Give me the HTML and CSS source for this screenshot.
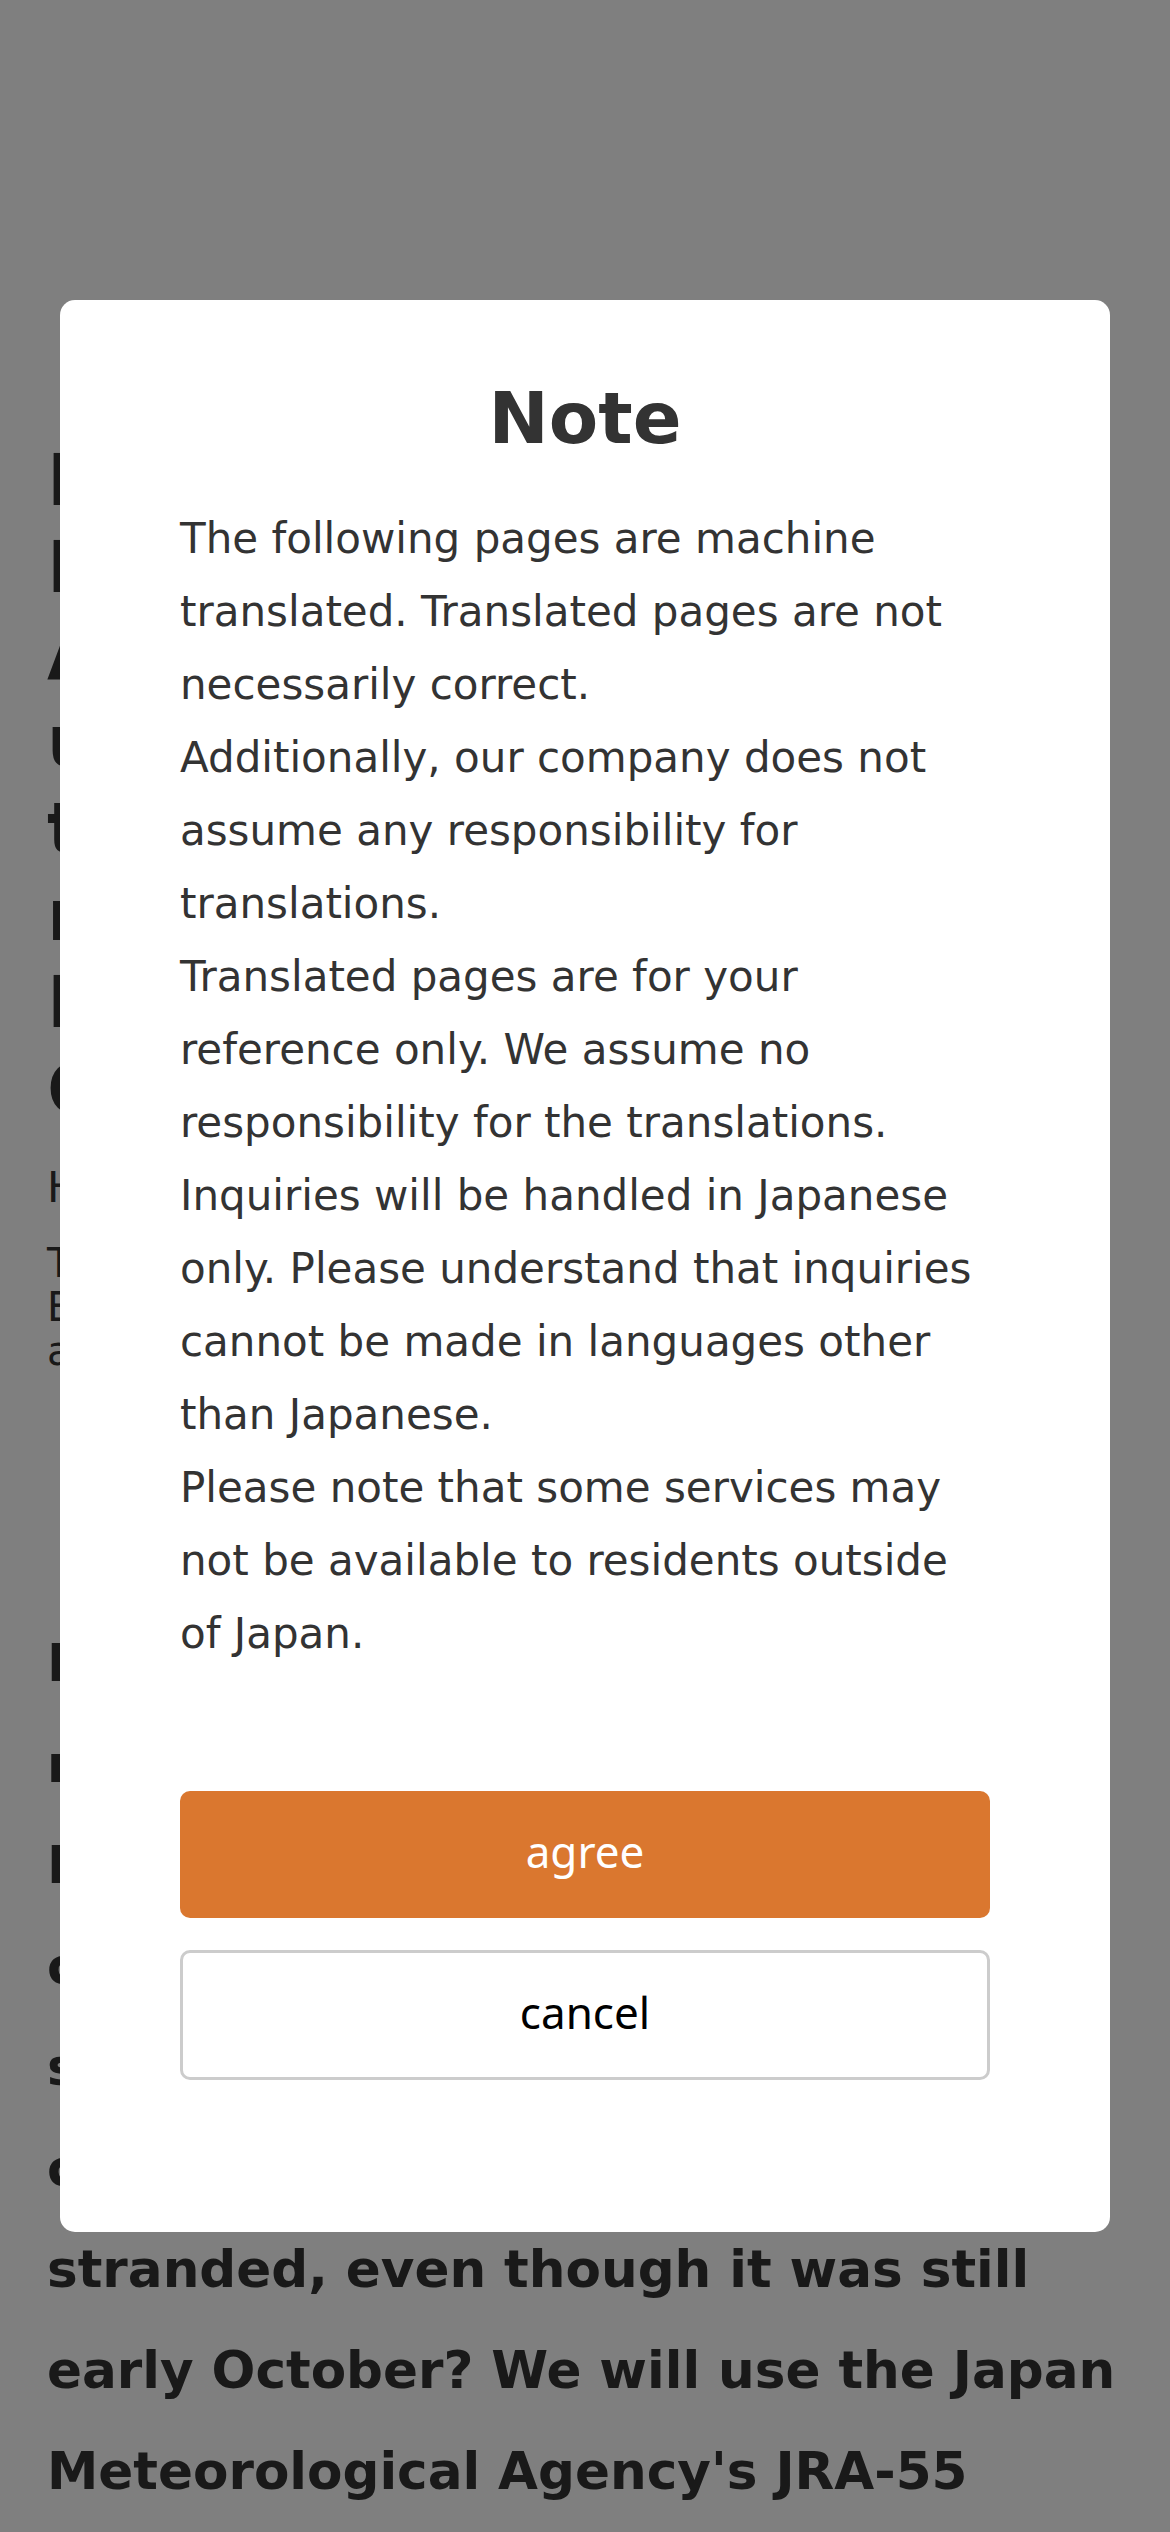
FILE: index.html
```html
<!DOCTYPE html>
<html lang="en">
<head>
<meta charset="utf-8">
<title>Note</title>
<link rel="stylesheet" href="styles.css">
</head>
<body>
<main class="article">
  <h1 class="article-title">Investigating<br>Intense snowfall<br>Across the Alps:<br>unusual cold air,<br>the jet stream and<br>record lows<br>In early<br>October</h1>
  <p class="article-meta">Hiroshi Tanaka</p>
  <p class="article-tags">Topics<br>Extreme weather<br>analysis</p>
  <p class="article-lead">In the Northern Alps, heavy snow<br>mainly in high mountain areas on<br>In this case, why did so many<br>climbers get caught in the snow and<br>suffer hypothermia, or become<br>caught in a blizzard and left<br>stranded, even though it was still<br>early October? We will use the Japan<br>Meteorological Agency's JRA-55<br>reanalysis data to look back at the</p>
</main>

<div class="overlay">
  <div class="dialog" role="dialog" aria-labelledby="dialog-title">
    <h2 class="dialog-title" id="dialog-title">Note</h2>
    <div class="dialog-body">
      <p>The following pages are machine translated. Translated pages are not necessarily correct.</p>
      <p>Additionally, our company does not assume any responsibility for translations.</p>
      <p>Translated pages are for your reference only. We assume no responsibility for the translations.</p>
      <p>Inquiries will be handled in Japanese only. Please understand that inquiries cannot be made in languages other than Japanese.</p>
      <p>Please note that some services may not be available to residents outside of Japan.</p>
    </div>
    <div class="dialog-actions">
      <button class="btn btn-agree" type="button">agree</button>
      <button class="btn btn-cancel" type="button">cancel</button>
    </div>
  </div>
</div>
</body>
</html>
```
FILE: styles.css
```css
html, body {
  margin: 0;
  padding: 0;
  height: 100%;
  overflow: hidden;
}

body {
  background: #fff;
  color: #333;
  font-family: "DejaVu Sans", sans-serif;
}

/* Background article */
.article {
  padding: 437px 47px 0;
}

.article-title {
  margin: 0;
  font-size: 72px;
  line-height: 87px;
  font-weight: bold;
}

.article-meta {
  margin: 30px 0 0;
  font-size: 42px;
  line-height: 50px;
}

.article-tags {
  margin: 28px 0 0;
  font-size: 40px;
  line-height: 44px;
}

.article-lead {
  margin: 240px 0 0;
  font-size: 51.6px;
  line-height: 101px;
  font-weight: bold;
}

/* Modal */
.overlay {
  position: fixed;
  inset: 0;
  background: rgba(0, 0, 0, 0.5);
  display: flex;
  justify-content: center;
  align-items: flex-start;
  padding: 300px 60px 0;
}

.dialog {
  width: 1050px;
  box-sizing: border-box;
  background: #fff;
  border-radius: 15px;
  padding: 76px 120px 152px;
}

.dialog-title {
  margin: 0;
  text-align: center;
  font-size: 72px;
  line-height: 84px;
  font-weight: bold;
  color: #333;
}

.dialog-body {
  margin-top: 42px;
  font-size: 42px;
  line-height: 73px;
  color: #333;
}

.dialog-body p {
  margin: 0;
}

.dialog-actions {
  margin-top: 121px;
  display: flex;
  flex-direction: column;
  gap: 32px;
}

.btn {
  display: block;
  width: 100%;
  box-sizing: border-box;
  border-radius: 10px;
  font-family: "Noto Sans", sans-serif;
  font-size: 44px;
  cursor: pointer;
}

.btn-agree {
  height: 127px;
  padding-bottom: 9px;
  background: #da772f;
  color: #fff;
  border: none;
}

.btn-cancel {
  height: 130px;
  padding-bottom: 7px;
  background: #fff;
  color: #000;
  border: 3px solid #ccc;
}
```
